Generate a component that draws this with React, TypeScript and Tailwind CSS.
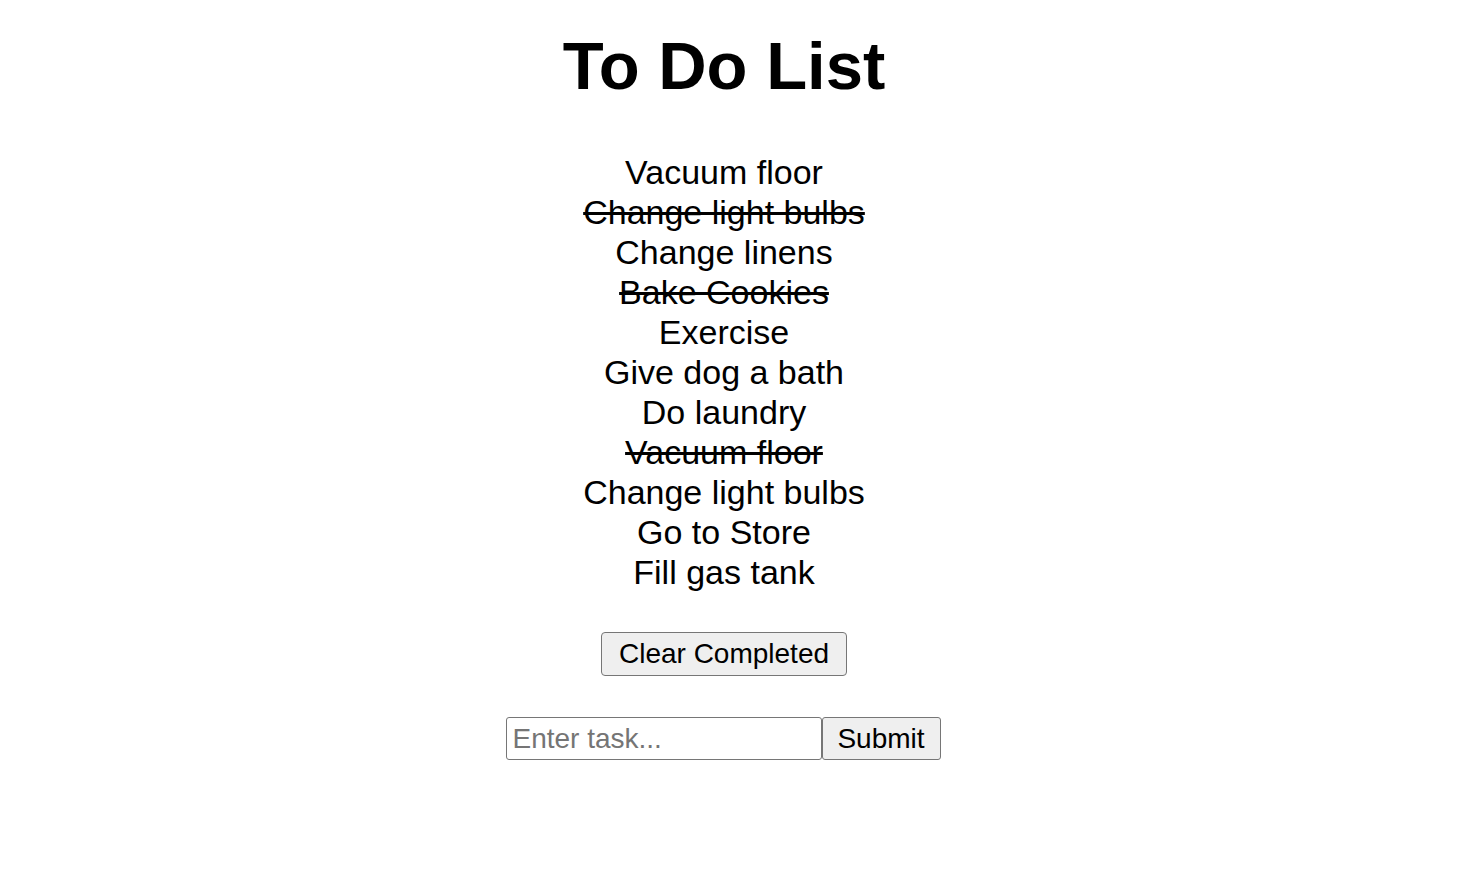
import React from "react";

const items: { text: string; done: boolean }[] = [
  { text: "Vacuum floor", done: false },
  { text: "Change light bulbs", done: true },
  { text: "Change linens", done: false },
  { text: "Bake Cookies", done: true },
  { text: "Exercise", done: false },
  { text: "Give dog a bath", done: false },
  { text: "Do laundry", done: false },
  { text: "Vacuum floor", done: true },
  { text: "Change light bulbs", done: false },
  { text: "Go to Store", done: false },
  { text: "Fill gas tank", done: false },
];

export default function App() {
  return (
    <div
      className="min-h-[872px] w-full bg-white text-black flex flex-col items-center pr-6"
      style={{ fontFamily: '"Liberation Sans", Arial, Helvetica, sans-serif' }}
    >
      <h1 className="mt-[27px] text-[67px] leading-[78px] font-bold">To Do List</h1>
      <ul className="mt-[47px] flex flex-col items-center">
        {items.map((it, i) => (
          <li
            key={i}
            className={`text-[34px] leading-[40px] ${it.done ? "line-through" : ""}`}
          >
            {it.text}
          </li>
        ))}
      </ul>
      <button className="mt-[40px] h-[44px] px-[17px] text-[28px] leading-[32px] border border-[#767676] bg-[#efefef] rounded-[4px] text-black">
        Clear Completed
      </button>
      <form className="mt-[41px] mr-[2px] flex flex-row" onSubmit={(e) => e.preventDefault()}>
        <input
          type="text"
          placeholder="Enter task..."
          className="w-[316px] h-[43px] px-[6px] text-[28px] border border-[#767676] rounded-[3px] bg-white placeholder:text-[#757575] outline-none"
        />
        <button
          type="submit"
          className="w-[119px] h-[43px] text-[28px] leading-[32px] border border-[#767676] bg-[#efefef] rounded-[3px] text-black"
        >
          Submit
        </button>
      </form>
    </div>
  );
}
